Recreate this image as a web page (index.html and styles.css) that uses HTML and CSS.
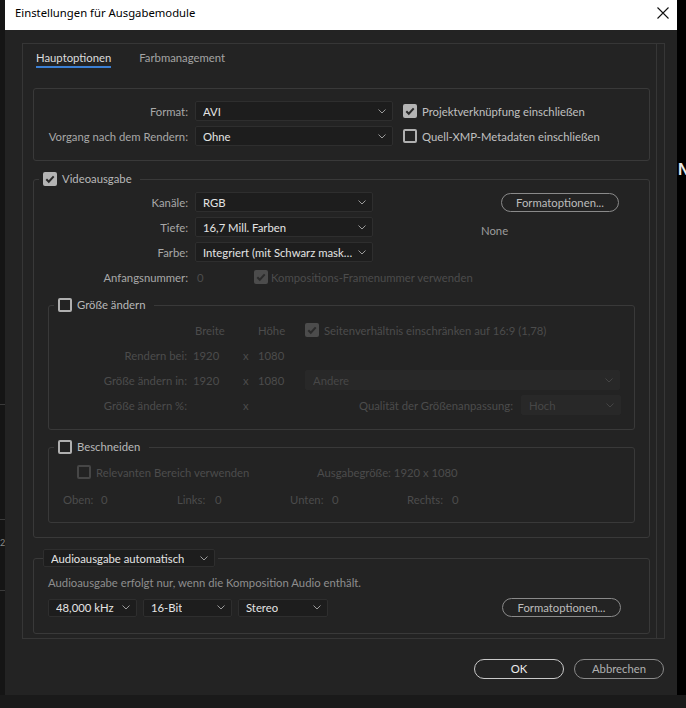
FILE: index.html
```html
<!DOCTYPE html>
<html lang="de">
<head>
<meta charset="utf-8">
<title>Einstellungen für Ausgabemodule</title>
<link rel="stylesheet" href="styles.css">
</head>
<body>
<div class="screen">
  <div class="bg-left">
    <div class="bl-line"></div>
    <div class="bl-block"></div>
    <div class="bl-line"></div>
    <div class="bl-num">2</div>
    <div class="bl-line2"></div>
  </div>
  <div class="dialog">
    <div class="titlebar">
      <span class="title">Einstellungen für Ausgabemodule</span>
      <svg class="close" width="12" height="12" viewBox="0 0 12 12"><path d="M0.5 0.5 L11.5 11.5 M11.5 0.5 L0.5 11.5" stroke="#111" stroke-width="1.1" fill="none"/></svg>
    </div>
    <div class="dlg-body">
      <div class="panel">
        <div class="panel-main">
          <div class="tabs">
            <span class="tab active">Hauptoptionen</span>
            <span class="tab">Farbmanagement</span>
          </div>

          <div class="box format-box">
            <div class="row">
              <span class="lbl l154">Format:</span>
              <div class="dd w198"><span>AVI</span><svg class="chev" width="8" height="5" viewBox="0 0 8 5"><path d="M0.5 0.5 L4 4 L7.5 0.5" fill="none" stroke="#9a9a9a" stroke-width="1"/></svg></div>
              <span class="cb on ml10"><svg width="14" height="14" viewBox="0 0 14 14"><path d="M3.3 7.2 L5.8 9.7 L10.7 4.3" fill="none" stroke="#2a2a2a" stroke-width="2"/></svg></span>
              <span class="cb-text">Projektverknüpfung einschließen</span>
            </div>
            <div class="row gap5">
              <span class="lbl l154">Vorgang nach dem Rendern:</span>
              <div class="dd w198"><span>Ohne</span><svg class="chev" width="8" height="5" viewBox="0 0 8 5"><path d="M0.5 0.5 L4 4 L7.5 0.5" fill="none" stroke="#9a9a9a" stroke-width="1"/></svg></div>
              <span class="cb off ml10"></span>
              <span class="cb-text">Quell-XMP-Metadaten einschließen</span>
            </div>
          </div>

          <fieldset class="grp video">
            <legend class="lgd"><span class="cb on"><svg width="14" height="14" viewBox="0 0 14 14"><path d="M3.3 7.2 L5.8 9.7 L10.7 4.3" fill="none" stroke="#2a2a2a" stroke-width="2"/></svg></span><span class="lgd-text">Videoausgabe</span></legend>
            <div class="row">
              <span class="lbl l154">Kanäle:</span>
              <div class="dd w178"><span>RGB</span><svg class="chev" width="8" height="5" viewBox="0 0 8 5"><path d="M0.5 0.5 L4 4 L7.5 0.5" fill="none" stroke="#9a9a9a" stroke-width="1"/></svg></div>
              <button class="pill fmt-btn">Formatoptionen...</button>
            </div>
            <div class="row gap5">
              <span class="lbl l154">Tiefe:</span>
              <div class="dd w178"><span>16,7 Mill. Farben</span><svg class="chev" width="8" height="5" viewBox="0 0 8 5"><path d="M0.5 0.5 L4 4 L7.5 0.5" fill="none" stroke="#9a9a9a" stroke-width="1"/></svg></div>
              <span class="none-text">None</span>
            </div>
            <div class="row gap5">
              <span class="lbl l154">Farbe:</span>
              <div class="dd w178"><span>Integriert (mit Schwarz mask…</span><svg class="chev" width="8" height="5" viewBox="0 0 8 5"><path d="M0.5 0.5 L4 4 L7.5 0.5" fill="none" stroke="#9a9a9a" stroke-width="1"/></svg></div>
            </div>
            <div class="row gap5">
              <span class="lbl l154">Anfangsnummer:</span>
              <span class="dis startnum">0</span>
              <span class="cb dis-on"><svg width="14" height="14" viewBox="0 0 14 14"><path d="M3.3 7.2 L5.8 9.7 L10.7 4.3" fill="none" stroke="#2b2b2b" stroke-width="2"/></svg></span>
              <span class="cb-text dis tight">Kompositions-Framenummer verwenden</span>
            </div>

            <fieldset class="grp sub resize">
              <legend class="lgd sub-lgd"><span class="cb off"></span><span class="lgd-text">Größe ändern</span></legend>
              <div class="row dis">
                <span class="c-lbl"></span>
                <span class="c-w hdr">Breite</span>
                <span class="c-x"></span>
                <span class="c-h">Höhe</span>
                <span class="cb dis-on"><svg width="14" height="14" viewBox="0 0 14 14"><path d="M3.3 7.2 L5.8 9.7 L10.7 4.3" fill="none" stroke="#2b2b2b" stroke-width="2"/></svg></span>
                <span class="cb-text">Seitenverhältnis einschränken auf 16:9 (1,78)</span>
              </div>
              <div class="row gap5 dis">
                <span class="c-lbl">Rendern bei:</span>
                <span class="c-w">1920</span>
                <span class="c-x">x</span>
                <span class="c-h">1080</span>
              </div>
              <div class="row gap5 dis">
                <span class="c-lbl">Größe ändern in:</span>
                <span class="c-w">1920</span>
                <span class="c-x">x</span>
                <span class="c-h">1080</span>
                <div class="dd dd-dis w315"><span>Andere</span><svg class="chev" width="8" height="5" viewBox="0 0 8 5"><path d="M0.5 0.5 L4 4 L7.5 0.5" fill="none" stroke="#444" stroke-width="1"/></svg></div>
              </div>
              <div class="row gap5 dis">
                <span class="c-lbl">Größe ändern %:</span>
                <span class="c-w"></span>
                <span class="c-x">x</span>
                <span class="c-h"></span>
                <span class="q-lbl">Qualität der Größenanpassung:</span>
                <div class="dd dd-dis w100"><span>Hoch</span><svg class="chev" width="8" height="5" viewBox="0 0 8 5"><path d="M0.5 0.5 L4 4 L7.5 0.5" fill="none" stroke="#444" stroke-width="1"/></svg></div>
              </div>
            </fieldset>

            <fieldset class="grp sub crop">
              <legend class="lgd sub-lgd"><span class="cb off"></span><span class="lgd-text">Beschneiden</span></legend>
              <div class="row dis crop-r1">
                <span class="crop-chk"><span class="cb dis-off"></span><span class="cb-text">Relevanten Bereich verwenden</span></span>
                <span>Ausgabegröße: 1920 x 1080</span>
              </div>
              <div class="row dis crop-r2">
                <span class="cg g1"><span class="cg-l">Oben:</span><span>0</span></span>
                <span class="cg g2"><span class="cg-l">Links:</span><span>0</span></span>
                <span class="cg g3"><span class="cg-l">Unten:</span><span>0</span></span>
                <span class="cg g4"><span class="cg-l">Rechts:</span><span>0</span></span>
              </div>
            </fieldset>
          </fieldset>

          <fieldset class="grp audio">
            <legend class="lgd audio-lgd">
              <div class="dd w172 dd-legend"><span>Audioausgabe automatisch</span><svg class="chev" width="8" height="5" viewBox="0 0 8 5"><path d="M0.5 0.5 L4 4 L7.5 0.5" fill="none" stroke="#9a9a9a" stroke-width="1"/></svg></div>
            </legend>
            <div class="audio-note">Audioausgabe erfolgt nur, wenn die Komposition Audio enthält.</div>
            <div class="audio-row">
              <div class="dd w89 h18"><span>48,000 kHz</span><svg class="chev" width="8" height="5" viewBox="0 0 8 5"><path d="M0.5 0.5 L4 4 L7.5 0.5" fill="none" stroke="#9a9a9a" stroke-width="1"/></svg></div>
              <div class="dd w89 h18"><span>16-Bit</span><svg class="chev" width="8" height="5" viewBox="0 0 8 5"><path d="M0.5 0.5 L4 4 L7.5 0.5" fill="none" stroke="#9a9a9a" stroke-width="1"/></svg></div>
              <div class="dd w90 h18"><span>Stereo</span><svg class="chev" width="8" height="5" viewBox="0 0 8 5"><path d="M0.5 0.5 L4 4 L7.5 0.5" fill="none" stroke="#9a9a9a" stroke-width="1"/></svg></div>
              <button class="pill fmt-btn2">Formatoptionen...</button>
            </div>
          </fieldset>
        </div>
        <div class="scrolltrack"></div>
      </div>
      <div class="buttons">
        <button class="pill big ok">OK</button>
        <button class="pill big cancel">Abbrechen</button>
      </div>
    </div>
  </div>
  <div class="bg-right">
    <span class="bgn">N</span>
  </div>
  <div class="bg-bottom"></div>
</div>
</body>
</html>
```

FILE: styles.css
```css
* { box-sizing: border-box; }
html, body { margin: 0; padding: 0; }
body {
  width: 686px;
  height: 708px;
  overflow: hidden;
  background: #000;
  font-family: "Lato", "Noto Sans", sans-serif;
  font-size: 11.3px;
  color: #a8a8a8;
}
.screen {
  display: grid;
  grid-template-columns: 5px 672px 9px;
  grid-template-rows: 695px 13px;
  width: 686px;
  height: 708px;
}
.bg-left {
  background: #151515;
  display: flex;
  flex-direction: column;
  padding-top: 404px;
}
.bl-line { height: 1px; background: #3a3a3a; flex-shrink: 0; }
.bl-block { height: 114px; }
.bl-num { font-size: 9px; color: #888; line-height: 10px; height: 22px; margin-top: 18px; overflow: hidden; }
.bl-line2 { height: 1px; background: #3a3a3a; margin-top: 30px; }
.bg-right { background: #000; position: relative; overflow: hidden; }
.bgn {
  position: absolute;
  left: 1px;
  top: 160px;
  color: #e8e8e8;
  font-family: "Liberation Sans", sans-serif;
  font-weight: bold;
  font-size: 16px;
  line-height: 20px;
}
.bg-bottom { grid-column: 1 / 4; background: #1a1a1a; }

.dialog {
  background: #232323;
  display: flex;
  flex-direction: column;
}
.titlebar {
  height: 30px;
  background: #fff;
  display: flex;
  align-items: center;
  justify-content: space-between;
  padding: 0 8px 5px 10px;
}
.title {
  font-family: "Noto Sans", "Open Sans", sans-serif;
  font-size: 11.3px;
  color: #000;
}
.close { display: block; }

.dlg-body {
  padding: 13px 13px 0 17px;
  display: flex;
  flex-direction: column;
}
.panel {
  width: 643px;
  height: 596px;
  border: 1px solid #363636;
  display: flex;
  overflow: hidden;
}
.panel-main {
  width: 633px;
  padding: 0 6px 0 10px;
  display: flex;
  flex-direction: column;
}
.scrolltrack {
  width: 8px;
  border-left: 1px solid #363636;
}

.tabs {
  margin-top: 6px;
  padding-left: 3px;
  display: flex;
  gap: 28px;
  height: 18px;
}
.tab {
  line-height: 16px;
  color: #a4a4a4;
}
.tab.active {
  color: #dcdcdc;
  border-bottom: 2px solid #3b7fd3;
}

.box {
  border: 1px solid #393939;
  border-radius: 3px;
}
.format-box {
  margin-top: 20px;
  height: 73px;
  padding-top: 12px;
}
.row {
  display: flex;
  align-items: center;
  height: 20px;
  flex-shrink: 0;
}
.gap5 { margin-top: 5px; }
.lbl {
  text-align: right;
  color: #a8a8a8;
  white-space: nowrap;
}
.l154 { width: 154px; margin-right: 7px; }

.dd {
  display: flex;
  align-items: center;
  justify-content: space-between;
  height: 20px;
  background: #1d1d1d;
  border: 1px solid #2e2e2e;
  border-radius: 2px;
  padding: 0 6px 0 7px;
  color: #e4e4e4;
  white-space: nowrap;
  overflow: hidden;
  flex-shrink: 0;
}
.dd span { overflow: hidden; }
.chev { flex-shrink: 0; display: block; }
.w198 { width: 198px; }
.w178 { width: 178px; }
.w315 { width: 315px; }
.w100 { width: 100px; }
.w172 { width: 172px; }
.w89 { width: 89px; }
.w90 { width: 90px; }
.h18 { height: 18px; }
.dd-dis {
  background: #282828;
  border-color: #282828;
  color: #474747;
}

.cb {
  width: 14px;
  height: 14px;
  border-radius: 2px;
  flex-shrink: 0;
  display: inline-block;
}
.cb svg { display: block; }
.cb.on { background: #b4b4b4; }
.cb.off { border: 2px solid #b0b0b0; }
.cb.dis-on { background: #4c4c4c; }
.cb.dis-off { border: 2px solid #464646; }
.ml10 { margin-left: 10px; }
.cb-text { margin-left: 5px; color: #c0c0c0; white-space: nowrap; }
.cb-text.tight { margin-left: 3px; }
.dis, .dis .cb-text { color: #4c4c4c; }
.cb-text.dis { color: #4c4c4c; }

.grp {
  margin: 0;
  padding: 0;
  border: 1px solid #393939;
  border-radius: 3px;
  min-width: 0;
}
.lgd {
  margin-left: 5px;
  padding: 0 8px 0 4px;
  height: 16px;
  display: flex;
  align-items: center;
}
.lgd-text { margin-left: 5px; color: #b8b8b8; line-height: 16px; }

.video {
  margin-top: 10px;
  padding: 5px 0 14px 0;
}
.pill {
  font-family: inherit;
  font-size: 11.3px;
  background: transparent;
  border: 1px solid #8a8a8a;
  border-radius: 10px;
  color: #bcbcbc;
  padding: 0;
  height: 19px;
  line-height: 17px;
  text-align: center;
}
.fmt-btn { width: 118px; margin-left: 128px; }
.none-text { margin-left: 108px; margin-top: 6px; color: #9c9c9c; }
.startnum { width: 59px; padding-left: 2px; }

.sub { margin: 10px 14px 0 14px; }
.sub-lgd { padding-right: 9px; }
.resize { padding: 7px 13px 14px 0; }
.c-lbl { width: 138px; margin-right: 6px; text-align: right; white-space: nowrap; }
.c-w { width: 50px; }
.c-w.hdr { padding-left: 2px; }
.c-x { width: 15px; }
.c-h { width: 47px; }
.q-lbl { flex: 1; text-align: right; margin-right: 8px; white-space: nowrap; }

.crop { margin-top: 9px; padding: 7px 0 13px 0; }
.crop-r1 { padding-left: 28px; }
.crop-chk { width: 240px; display: flex; align-items: center; }
.crop-r2 { margin-top: 7px; padding-left: 14px; }
.cg { display: flex; }
.g1 { width: 114px; }
.g2 { width: 113px; }
.g3 { width: 117px; }
.g1 .cg-l { width: 38px; }
.g2 .cg-l { width: 38px; }
.g3 .cg-l { width: 42px; }
.g4 .cg-l { width: 45px; }

.audio {
  margin-top: 11px;
  padding: 8px 28px 16px 0;
}
.audio-lgd { margin-left: 9px; padding: 0 3px 0 0; height: 18px; }
.dd-legend { height: 18px; padding-left: 7px; }
.audio-note { margin-left: 14px; line-height: 16px; color: #8e8e8e; white-space: nowrap; }
.audio-row {
  margin-top: 7px;
  margin-left: 14px;
  display: flex;
  align-items: center;
  gap: 6px;
}
.fmt-btn2 { width: 119px; margin-left: auto; height: 19px; }

.buttons {
  margin-top: 20px;
  display: flex;
  justify-content: flex-end;
  gap: 10px;
}
.pill.big { width: 90px; height: 20px; line-height: 18px; }
.ok { border-color: #c9c9c9; color: #ececec; }
.cancel { border-color: #8a8a8a; color: #b0b0b0; }
```
